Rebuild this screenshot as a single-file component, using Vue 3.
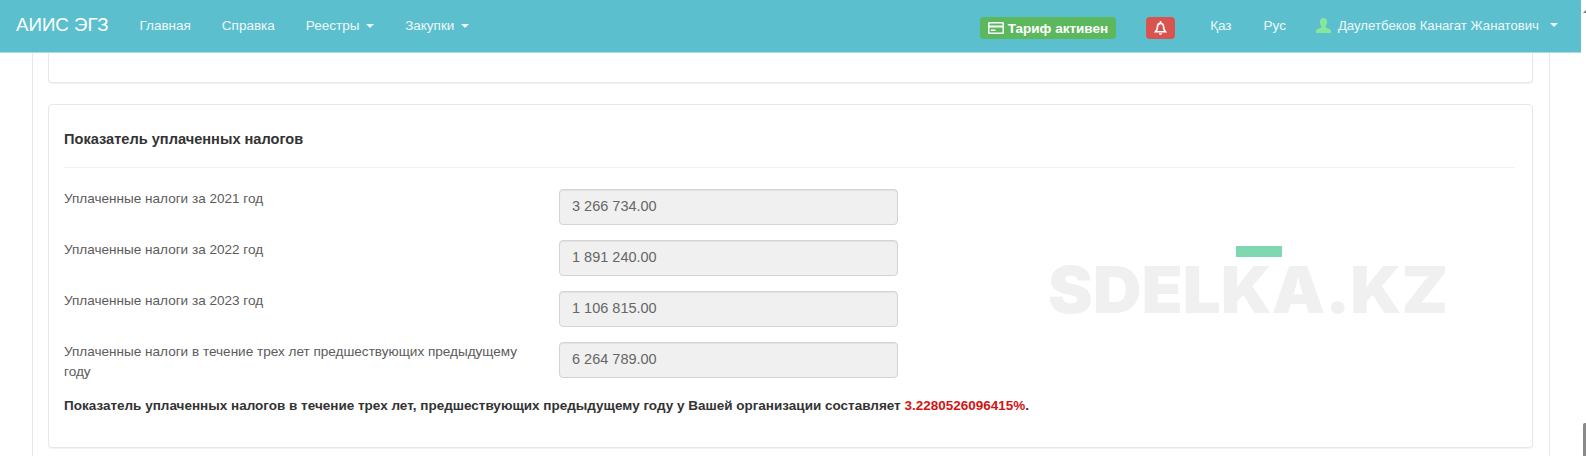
<template>
  <div class="page">
    <nav class="navbar">
      <a class="brand">АИИС ЭГЗ</a>
      <a class="nav-link home">Главная</a>
      <a class="nav-link">Справка</a>
      <a class="nav-link">Реестры <span class="caret"></span></a>
      <a class="nav-link">Закупки <span class="caret"></span></a>

      <div class="nav-right">
        <span class="tariff">
          <svg class="card-icon" viewBox="0 0 16 14" width="16" height="14">
            <path fill="#fff" fill-rule="evenodd" d="M1.500 1h13A1.500 1.500 0 0 1 16 2.500v9a1.500 1.500 0 0 1-1.500 1.500h-13A1.500 1.500 0 0 1 0 11.500v-9A1.500 1.500 0 0 1 1.500 1zM1.500 2.500V4.500h13V2.500zM1.500 6.500v5h13v-5zM3 8.500h4.500v1.500H3z" />
          </svg>
          Тариф активен
        </span>
        <span class="bell">
          <svg viewBox="0 0 14 16" width="13" height="15">
            <path fill="none" stroke="#fff" stroke-width="1.800" d="M7 2.500c-2.300 0-3.300 1.700-3.300 3.700 0 3-1 4.300-2.100 5.300h10.800c-1.100-1-2.100-2.300-2.100-5.300 0-2-1-3.700-3.300-3.700z" />
            <path fill="#fff" d="M5.200 13h3.600a1.800 1.800 0 0 1-3.600 0zM6.200 0h1.600v2.500H6.200z" />
          </svg>
        </span>
        <a class="nav-link lang">Қаз</a>
        <a class="nav-link lang">Рус</a>
        <a class="nav-link user">
          <svg viewBox="0 0 14 14" width="15" height="15">
            <path fill="#86e69a" d="M7 0c2.200 0 3.400 1.700 3.400 3.800 0 1.600-.7 3-1.500 3.800v1.300c1.800.6 5.100 1.500 5.100 3.100v2H0v-2c0-1.600 3.300-2.500 5.100-3.100V7.600C4.300 6.800 3.600 5.400 3.600 3.800 3.600 1.700 4.800 0 7 0z" />
          </svg>
          <span class="user-name">Даулетбеков Канагат Жанатович</span>
          <span class="caret"></span>
        </a>
      </div>
    </nav>

    <main class="content">
      <section class="panel panel-prev"></section>

      <section class="panel panel-tax">
        <h4 class="panel-title">Показатель уплаченных налогов</h4>
        <div class="rows">
          <div v-for="row in rows" :key="row.label" class="row">
            <label class="row-label">{{ row.label }}</label>
            <input class="row-input" :value="row.value" disabled />
          </div>
        </div>
        <p class="result">
          Показатель уплаченных налогов в течение трех лет, предшествующих предыдущему году у Вашей организации составляет
          <span class="percent">3.2280526096415%</span>.
        </p>

        <div class="watermark">
          <span class="watermark-bar"></span>
          <span class="watermark-text">SDELKA.KZ</span>
        </div>
      </section>
    </main>

    <span class="scroll-arrow"></span>
    <span class="scroll-thumb"></span>
  </div>
</template>

<script setup>
const rows = [
  { label: 'Уплаченные налоги за 2021 год', value: '3 266 734.00' },
  { label: 'Уплаченные налоги за 2022 год', value: '1 891 240.00' },
  { label: 'Уплаченные налоги за 2023 год', value: '1 106 815.00' },
  { label: 'Уплаченные налоги в течение трех лет предшествующих предыдущему году', value: '6 264 789.00' }
]
</script>

<style>
html, body {
  margin: 0;
  background: #fff;
  overflow: hidden;
}
</style>

<style scoped>
.page {
  position: relative;
  width: 1586px;
  height: 456px;
  overflow: hidden;
  font-family: "Liberation Sans", Arial, sans-serif;
  font-size: 13px;
  color: #333;
}

.navbar {
  display: flex;
  align-items: center;
  width: 1581px;
  height: 53px;
  box-sizing: border-box;
  padding: 0 0 2px 16px;
  background: #5bbfce;
  border-bottom: 1px solid #a9dde4;
}

.brand {
  font-size: 18.700px;
  color: #fff;
  margin-right: 31px;
}

.nav-link {
  color: #eef9fb;
  font-size: 13.500px;
  margin-right: 31px;
  white-space: nowrap;
}

.caret {
  display: inline-block;
  width: 0;
  height: 0;
  margin-left: 3px;
  vertical-align: 2px;
  border-top: 4px solid #eef9fb;
  border-left: 4px solid transparent;
  border-right: 4px solid transparent;
}

.nav-right {
  display: flex;
  align-items: center;
  margin-left: auto;
}

.tariff {
  display: flex;
  align-items: center;
  gap: 4px;
  height: 22px;
  margin: 6px 30px 0 0;
  padding: 0 8px;
  background: #5cb85c;
  border-radius: 4px;
  color: #fff;
  font-weight: 700;
  font-size: 13.500px;
}

.bell {
  display: flex;
  align-items: center;
  justify-content: center;
  width: 29px;
  height: 22px;
  margin: 6px 35px 0 0;
  background: #d9534f;
  border-radius: 4px;
}

.lang {
  margin-right: 32px;
}

.user {
  display: flex;
  align-items: center;
  margin: 0 23px 0 -2px;
  font-size: 13.200px;
}

.user-name {
  margin: 0 8px 0 7px;
}

.content {
  display: flex;
  flex-direction: column;
  gap: 21px;
  box-sizing: border-box;
  width: 1518px;
  margin-left: 32px;
  height: 403px;
  padding: 0 16px 0 15px;
  border-left: 1px solid #e7e7e7;
  border-right: 1px solid #e7e7e7;
}

.panel {
  box-sizing: border-box;
  background: #fff;
  border: 1px solid #e8e8e8;
  border-radius: 4px;
  box-shadow: 0 1px 1px rgba(0, 0, 0, .05);
}

.panel-prev {
  height: 30px;
  border-top: 0;
  border-radius: 0 0 4px 4px;
}

.panel-tax {
  position: relative;
  height: 344px;
  padding: 0 17px 0 15px;
}

.panel-title {
  margin: 0;
  height: 63px;
  padding-top: 26px;
  box-sizing: border-box;
  font-size: 14.600px;
  line-height: 17px;
  font-weight: 700;
  border-bottom: 1px solid #f0f0f0;
}

.rows {
  display: flex;
  flex-direction: column;
  gap: 15px;
  padding-top: 21px;
}

.row {
  display: grid;
  grid-template-columns: 495px 339px;
  height: 36px;
}

.row-label {
  width: 470px;
  font-size: 13.550px;
  line-height: 20px;
  color: #5c5c5c;
}

.row-input {
  box-sizing: border-box;
  width: 339px;
  height: 36px;
  padding: 0 12px 2px;
  border: 1px solid #d4d4d4;
  border-radius: 4px;
  background: #f0f0f0;
  box-shadow: inset 0 1px 1px rgba(0, 0, 0, .06);
  font-family: inherit;
  font-size: 14.500px;
  color: #666;
  opacity: 1;
}

.result {
  margin: 19px 0 0;
  font-size: 13.500px;
  font-weight: 700;
  line-height: 18px;
}

.percent {
  color: #d01414;
}

.watermark {
  position: absolute;
  left: 1002px;
  top: 141px;
  width: 396px;
  height: 70px;
  pointer-events: none;
}

.watermark-bar {
  position: absolute;
  left: 185px;
  top: 0;
  width: 46px;
  height: 11px;
  background: #80d8b0;
}

.watermark-text {
  position: absolute;
  left: -3px;
  top: 9px;
  font-family: Inter, sans-serif;
  font-weight: 900;
  font-size: 65px;
  line-height: 70px;
  color: #f0f0f0;
  white-space: nowrap;
  transform: scaleX(1.035);
  transform-origin: left center;
}

.scroll-arrow {
  position: absolute;
  right: 0;
  top: 10px;
  width: 0;
  height: 0;
  border-left: 3px solid transparent;
  border-bottom: 3px solid #777;
}

.scroll-thumb {
  position: absolute;
  right: 0;
  top: 423px;
  width: 3px;
  height: 33px;
  background: #8a8a8a;
  border-radius: 2px 0 0 0;
}
</style>
